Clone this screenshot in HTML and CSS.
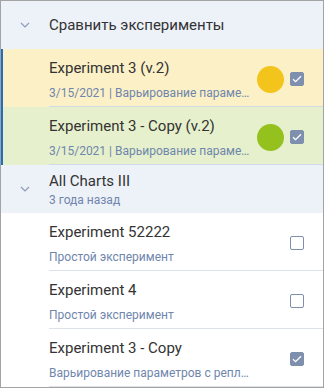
FILE: index.html
```html
<!DOCTYPE html>
<html lang="en">
<head>
    <meta charset="UTF-8">
    <meta name="viewport" content="width=device-width, initial-scale=1.0">
    <title>Сравнить эксперименты</title>
    <link rel="stylesheet" href="styles.css">
</head>
<body>
    <div class="panel">
        <div class="group-head">
            <span class="chevron"><svg width="10" height="6" viewBox="0 0 10 6"><path d="M1 1l4 4 4-4" fill="none" stroke="#8d9bb8" stroke-width="1.2"/></svg></span>
            <div class="group-text">
                <div class="group-title">Сравнить эксперименты</div>
            </div>
        </div>

        <div class="row selected yellow">
            <div class="row-text">
                <div class="row-title">Experiment 3 (v.2)</div>
                <div class="row-sub">3/15/2021 | Варьирование параметров с репликами</div>
            </div>
            <span class="dot dot-yellow"></span>
            <span class="check checked"><svg width="10" height="8" viewBox="0 0 10 8"><path d="M1 4.2l2.6 2.5L9 1.2" fill="none" stroke="#fff" stroke-width="1.3"/></svg></span>
        </div>

        <div class="row selected green">
            <div class="row-text">
                <div class="row-title">Experiment 3 - Copy (v.2)</div>
                <div class="row-sub">3/15/2021 | Варьирование параметров с репликами</div>
            </div>
            <span class="dot dot-green"></span>
            <span class="check checked"><svg width="10" height="8" viewBox="0 0 10 8"><path d="M1 4.2l2.6 2.5L9 1.2" fill="none" stroke="#fff" stroke-width="1.3"/></svg></span>
        </div>

        <div class="group-head">
            <span class="chevron"><svg width="10" height="6" viewBox="0 0 10 6"><path d="M1 1l4 4 4-4" fill="none" stroke="#8d9bb8" stroke-width="1.2"/></svg></span>
            <div class="group-text">
                <div class="group-title">All Charts III</div>
                <div class="group-sub">3 года назад</div>
            </div>
        </div>

        <div class="row">
            <div class="row-text">
                <div class="row-title">Experiment 52222</div>
                <div class="row-sub">Простой эксперимент</div>
            </div>
            <span class="dot"></span>
            <span class="check"></span>
        </div>

        <div class="row">
            <div class="row-text">
                <div class="row-title">Experiment 4</div>
                <div class="row-sub">Простой эксперимент</div>
            </div>
            <span class="dot"></span>
            <span class="check"></span>
        </div>

        <div class="row">
            <div class="row-text">
                <div class="row-title">Experiment 3 - Copy</div>
                <div class="row-sub">Варьирование параметров с репликами</div>
            </div>
            <span class="dot"></span>
            <span class="check checked"><svg width="10" height="8" viewBox="0 0 10 8"><path d="M1 4.2l2.6 2.5L9 1.2" fill="none" stroke="#fff" stroke-width="1.3"/></svg></span>
        </div>
    </div>
</body>
</html>
```

FILE: styles.css
```css
body { margin: 0; font-family: Roboto, sans-serif; }
.panel { width: 324px; height: 388px; box-sizing: border-box; border: 1px solid #a3a3a3; overflow: hidden; background: #fff; }

.group-head { display: flex; align-items: center; height: 48px; background: #edf1f8; }
.chevron { width: 48px; display: flex; justify-content: center; }
.chevron svg { display: block; margin-left: -1px; }
.group-title { font-size: 15px; color: #333; line-height: 20px; }
.group-sub { font-size: 12px; color: #6f86ad; line-height: 16px; margin-top: 1px; }

.row { display: flex; align-items: center; height: 58px; box-sizing: border-box; padding: 2px 19px 0 48px; position: relative; }
.row::after { content: ""; position: absolute; left: 48px; right: 0; bottom: 0; height: 1px; background: #dde2ea; }
.row.selected { border-left: 2px solid #1e6fbf; padding-left: 46px; }
.row.selected::after { left: 46px; background: #d3dbe8; }
.yellow { background: #fcf0c7; }
.green { background: #e6f0cc; }

.row-text { flex: 1; min-width: 0; }
.row-title { font-size: 15px; color: #333; line-height: 22px; }
.row-sub { font-size: 12px; color: #6f86ad; line-height: 18px; margin-top: 5px; white-space: nowrap; overflow: hidden; text-overflow: ellipsis; }

.dot { width: 27px; height: 27px; border-radius: 50%; margin: 0 6px; flex: none; }
.dot-yellow { background: #f2c41c; }
.dot-green { background: #95c11f; }

.check { width: 14px; height: 14px; box-sizing: border-box; border: 1px solid #7e8fae; border-radius: 2px; flex: none; display: flex; align-items: center; justify-content: center; }
.check.checked { background: #7f8fae; }
.check svg { display: block; }
```
